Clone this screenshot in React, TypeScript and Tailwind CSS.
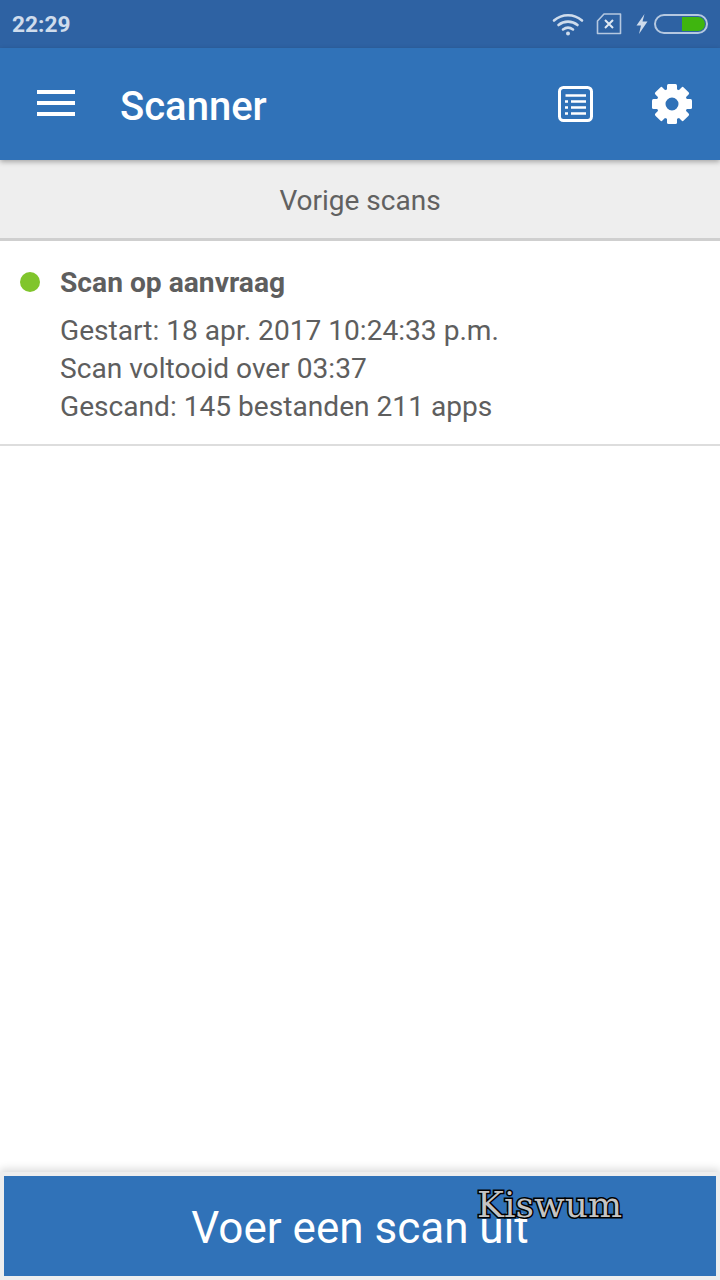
import { useState } from "react";

function WifiIcon() {
  return (
    <svg width="32" height="24" viewBox="0 0 32 24" fill="none" stroke="#cfdcec" strokeWidth="2.6" strokeLinecap="round">
      <path d="M2 8.500C10 1.500 22 1.500 30 8.500" />
      <path d="M6.500 13C12 8.500 20 8.500 25.500 13" />
      <path d="M11 17.500C14 15.300 18 15.300 21 17.500" />
      <circle cx="16" cy="21.500" r="2" fill="#cfdcec" stroke="none" />
    </svg>
  );
}

function SimIcon() {
  return (
    <svg width="26" height="22" viewBox="0 0 26 22" fill="none" stroke="#b5c8e0" strokeWidth="1.6">
      <path d="M8 1H24.500V20.500H1.500V8Z" strokeLinejoin="round" />
      <path d="M9 7L17 15M17 7L9 15" stroke="#dfe8f3" strokeWidth="2" />
    </svg>
  );
}

function BoltIcon() {
  return (
    <svg width="12" height="20" viewBox="0 0 12 20" fill="#cfdcec">
      <path d="M8.500 0L0.500 11.500H5L3 20L11.500 7.500H6.500Z" />
    </svg>
  );
}

function BatteryIcon() {
  return (
    <div className="w-[54px] h-[20px] rounded-full border-2 border-[#b5c8e0] p-[1px] flex justify-end">
      <div className="w-[23px] h-full bg-[#3fb50f] rounded-r-full" />
    </div>
  );
}

function ListIcon() {
  return (
    <svg width="36" height="36" viewBox="0 0 36 36" fill="none" stroke="#fff">
      <rect x="1.500" y="1.500" width="32" height="33" rx="4" strokeWidth="3" />
      <path d="M7.500 9.500H28" strokeWidth="2.500" />
      <path d="M7 15.500H10M13 15.500H28M7 21.500H10M13 21.500H28M7 27.500H10M13 27.500H28" strokeWidth="2.500" />
    </svg>
  );
}

function GearIcon() {
  return (
    <svg width="40" height="40" viewBox="0 0 40 40" fill="#fff">
      <circle cx="20" cy="20" r="11" fill="none" stroke="#fff" strokeWidth="9" />
      {[0, 45, 90, 135, 180, 225, 270, 315].map((deg) => (
        <rect key={deg} x="15" y="0" width="10" height="8" rx="1.500" transform={`rotate(${deg} 20 20)`} />
      ))}
    </svg>
  );
}

const details = [
  "Gestart: 18 apr. 2017 10:24:33 p.m.",
  "Scan voltooid over 03:37",
  "Gescand: 145 bestanden 211 apps",
];

export default function App() {
  const [scanning, setScanning] = useState(false);

  return (
    <div className="w-[720px] h-[1280px] flex flex-col bg-white font-['Roboto',sans-serif] overflow-hidden">
      <div className="h-[48px] shrink-0 bg-[#2e62a3] flex items-center justify-between pl-[12px] pr-[12px]">
        <span className="text-[22.700px] font-bold text-[#cfdcec] pt-[3px]">22:29</span>
        <div className="flex items-center">
          <WifiIcon />
          <div className="ml-[12px]"><SimIcon /></div>
          <div className="ml-[14px]"><BoltIcon /></div>
          <div className="ml-[6px]"><BatteryIcon /></div>
        </div>
      </div>

      <header className="h-[112px] shrink-0 bg-[#3072b8] flex items-center relative z-10 shadow-[0_2px_5px_rgba(0,0,0,0.3)]">
        <button className="ml-[37px] w-[38px] flex flex-col gap-[7px] mb-[2px]">
          <span className="block h-[4px] bg-white" />
          <span className="block h-[4px] bg-white" />
          <span className="block h-[4px] bg-white" />
        </button>
        <h1 className="ml-[45px] text-[40px] font-medium text-white flex-1 pt-[6px]">Scanner</h1>
        <button className="mr-[58px]"><ListIcon /></button>
        <button className="mr-[28px]"><GearIcon /></button>
      </header>

      <div className="h-[81px] shrink-0 bg-[#eeeeee] border-b-[3px] border-[#cfcfcf] flex items-center justify-center text-[28px] text-[#616161] pt-[3px]">
        Vorige scans
      </div>

      <div className="h-[205px] shrink-0 border-b-2 border-[#dddddd] pl-[20px] pt-[24px] flex">
        <div className="w-[20px] h-[20px] mt-[7px] rounded-full bg-[#80c52c]" />
        <div className="ml-[20px] text-[#5e5e5e]">
          <div className="text-[28.2px] font-bold leading-[36px] mb-[11px]">Scan op aanvraag</div>
          {details.map((line) => (
            <div key={line} className="text-[28.12px] leading-[38px]">{line}</div>
          ))}
        </div>
      </div>

      <div className="flex-1" />

      <div className="h-[108px] shrink-0 bg-[#eeeeee] p-[4px] relative shadow-[0_-3px_8px_rgba(0,0,0,0.14)]">
        <button
          onClick={() => setScanning(!scanning)}
          className="w-full h-[100px] bg-[#3072b8] text-white text-[44px] flex items-center justify-center pt-[4px]"
        >
          Voer een scan uit
        </button>
        <span className="absolute left-[477px] top-[13px] text-[36px] leading-[40px] font-['DejaVu_Serif',serif] text-[#c4c4c4] [-webkit-text-stroke:3px_#000] [paint-order:stroke_fill]">
          Kiswum
        </span>
      </div>
    </div>
  );
}
